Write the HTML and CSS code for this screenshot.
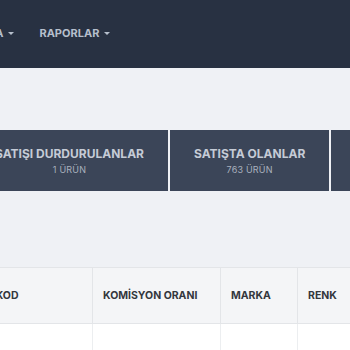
FILE: index.html
```html
<!DOCTYPE html>
<html lang="tr">
  <head>
    <meta charset="UTF-8" />
    <title>Ürün Listesi</title>
    <link rel="stylesheet" href="styles.css">
  </head>
  <body>
    <div class="navbar">
      <ul class="nav-menu">
        <li class="nav-item">KATEGORİA <span class="caret"></span></li>
        <li class="nav-item">RAPORLAR <span class="caret"></span></li>
      </ul>
    </div>

    <div class="content">
      <div class="status-tabs">
        <div class="status-tab">
          <span class="tab-title">SATIŞI DURDURULANLAR</span>
          <span class="tab-count">1 ÜRÜN</span>
        </div>
        <div class="status-tab">
          <span class="tab-title">SATIŞTA OLANLAR</span>
          <span class="tab-count">763 ÜRÜN</span>
        </div>
        <div class="status-tab">
          <span class="tab-title">ONAY BEKLEYENLER</span>
          <span class="tab-count">0 ÜRÜN</span>
        </div>
      </div>

      <table class="product-table">
        <colgroup>
          <col class="col-code" />
          <col class="col-commission" />
          <col class="col-brand" />
          <col class="col-color" />
          <col class="col-size" />
        </colgroup>
        <thead>
          <tr>
            <th>BARKOD</th>
            <th>KOMİSYON ORANI</th>
            <th>MARKA</th>
            <th>RENK</th>
            <th>BEDEN</th>
          </tr>
        </thead>
        <tbody>
          <tr>
            <td></td>
            <td></td>
            <td></td>
            <td></td>
            <td></td>
          </tr>
        </tbody>
      </table>
    </div>
  </body>
</html>
```

FILE: styles.css
```css
body {
  font-family: Inter, "Noto Sans", sans-serif;
  margin: 0;
  padding: 0;
  background-color: #eff1f5;
  overflow: hidden;
  width: 350px;
  height: 350px;
}
.navbar {
  background-color: #283142;
  height: 68px;
  display: flex;
  align-items: center;
}
.nav-menu {
  list-style: none;
  margin: 0 0 2px -61px;
  padding: 0;
  display: flex;
  gap: 25px;
}
.nav-item {
  color: #b6bfcc;
  font-size: 11px;
  font-weight: 700;
  white-space: nowrap;
  display: flex;
  align-items: center;
  gap: 5px;
}
.caret {
  width: 0;
  height: 0;
  border-left: 3px solid transparent;
  border-right: 3px solid transparent;
  border-top: 3px solid #b6bfcc;
}
.content {
  padding-top: 62px;
}
.status-tabs {
  display: flex;
  gap: 2px;
  margin-left: -29px;
}
.status-tab {
  background-color: #3b4558;
  height: 61px;
  padding: 0 24px;
  display: flex;
  flex-direction: column;
  align-items: center;
  justify-content: center;
  gap: 3px;
  white-space: nowrap;
  flex-shrink: 0;
}
.tab-title {
  color: #c5cbd6;
  font-size: 12px;
  font-weight: 700;
}
.tab-count {
  color: #a9b1be;
  font-size: 9px;
  letter-spacing: 0.2px;
}
.product-table {
  margin-top: 76px;
  margin-left: -37px;
  width: 534px;
  border-collapse: collapse;
  background-color: #ffffff;
  table-layout: fixed;
}
.col-code {
  width: 129px;
}
.col-commission {
  width: 128px;
}
.col-brand {
  width: 77px;
}
.col-color {
  width: 100px;
}
.col-size {
  width: 100px;
}
.product-table th {
  background-color: #f4f5f7;
  height: 55px;
  padding: 0 10px;
  text-align: left;
  color: #33373d;
  font-size: 10.5px;
  font-weight: 700;
  border: 1px solid #e3e5e8;
  white-space: nowrap;
}
.product-table td {
  height: 40px;
  border-left: 1px solid #eceef0;
  border-right: 1px solid #eceef0;
}
```
